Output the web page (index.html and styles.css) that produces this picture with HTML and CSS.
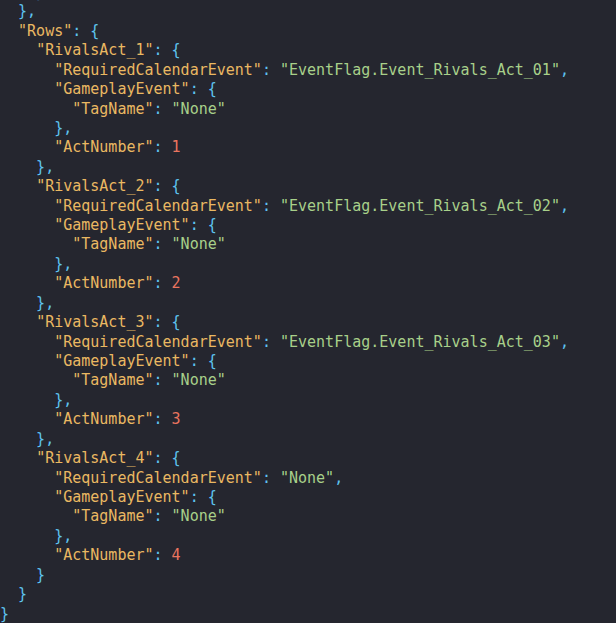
FILE: index.html
```html
<!DOCTYPE html>
<html>
<head>
<meta charset="utf-8">
<link rel="stylesheet" href="styles.css">
</head>
<body>
<pre class="code"><span class="p">    }</span>
<span class="p">  },</span>
  <span class="k">"Rows"</span><span class="p">: {</span>
    <span class="k">"RivalsAct_1"</span><span class="p">: {</span>
      <span class="k">"RequiredCalendarEvent"</span><span class="p">: </span><span class="s">"EventFlag.Event_Rivals_Act_01"</span><span class="p">,</span>
      <span class="k">"GameplayEvent"</span><span class="p">: {</span>
        <span class="k">"TagName"</span><span class="p">: </span><span class="s">"None"</span>
<span class="p">      },</span>
      <span class="k">"ActNumber"</span><span class="p">: </span><span class="n">1</span>
<span class="p">    },</span>
    <span class="k">"RivalsAct_2"</span><span class="p">: {</span>
      <span class="k">"RequiredCalendarEvent"</span><span class="p">: </span><span class="s">"EventFlag.Event_Rivals_Act_02"</span><span class="p">,</span>
      <span class="k">"GameplayEvent"</span><span class="p">: {</span>
        <span class="k">"TagName"</span><span class="p">: </span><span class="s">"None"</span>
<span class="p">      },</span>
      <span class="k">"ActNumber"</span><span class="p">: </span><span class="n">2</span>
<span class="p">    },</span>
    <span class="k">"RivalsAct_3"</span><span class="p">: {</span>
      <span class="k">"RequiredCalendarEvent"</span><span class="p">: </span><span class="s">"EventFlag.Event_Rivals_Act_03"</span><span class="p">,</span>
      <span class="k">"GameplayEvent"</span><span class="p">: {</span>
        <span class="k">"TagName"</span><span class="p">: </span><span class="s">"None"</span>
<span class="p">      },</span>
      <span class="k">"ActNumber"</span><span class="p">: </span><span class="n">3</span>
<span class="p">    },</span>
    <span class="k">"RivalsAct_4"</span><span class="p">: {</span>
      <span class="k">"RequiredCalendarEvent"</span><span class="p">: </span><span class="s">"None"</span><span class="p">,</span>
      <span class="k">"GameplayEvent"</span><span class="p">: {</span>
        <span class="k">"TagName"</span><span class="p">: </span><span class="s">"None"</span>
<span class="p">      },</span>
      <span class="k">"ActNumber"</span><span class="p">: </span><span class="n">4</span>
<span class="p">    }</span>
<span class="p">  }</span>
<span class="p">}</span></pre>
</body>
</html>
```
FILE: styles.css
```css
html, body {
  margin: 0;
  padding: 0;
  background: #25262f;
  overflow: hidden;
}
.code {
  margin: -17px 0 0 0;
  padding: 0;
  font-family: "DejaVu Sans Mono", "Liberation Mono", monospace;
  font-size: 15px;
  line-height: 19.42px;
  color: #5ec4f0;
  white-space: pre;
}
.p { color: #5ec4f0; }
.k { color: #eab862; }
.s { color: #a8d08a; }
.n { color: #ea745f; }
```
